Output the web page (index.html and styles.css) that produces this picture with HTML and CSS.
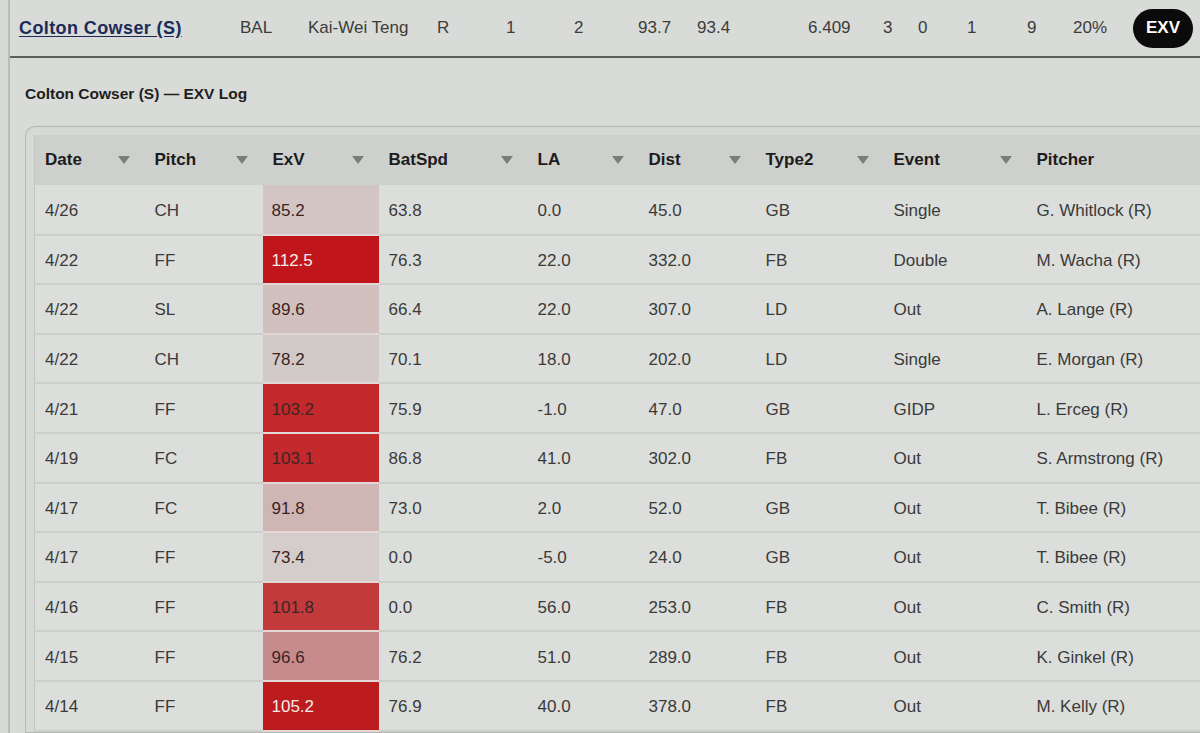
FILE: index.html
```html
<!DOCTYPE html>
<html lang="en">
<head>
<meta charset="utf-8">
<title>Colton Cowser (S) — EXV Log</title>
<link rel="stylesheet" href="styles.css">
</head>
<body>
<div class="page">
  <div class="topbar">
    <a class="player-link" href="#">Colton Cowser (S)</a>
    <span>BAL</span>
    <span>Kai-Wei Teng</span>
    <span>R</span>
    <span>1</span>
    <span>2</span>
    <span>93.7</span>
    <span>93.4</span>
    <span>6.409</span>
    <span>3</span>
    <span>0</span>
    <span>1</span>
    <span>9</span>
    <span>20%</span>
    <span class="pill">EXV</span>
  </div>

  <section class="log">
    <h2 class="log-title">Colton Cowser (S) — EXV Log</h2>
    <div class="card">
      <table class="grid">
        <colgroup>
          <col class="c-date"><col class="c-pitch"><col class="c-exv"><col class="c-bat"><col class="c-la"><col class="c-dist"><col class="c-type"><col class="c-event"><col class="c-pitcher">
        </colgroup>
        <thead>
          <tr>
            <th><div class="th"><span>Date</span><i class="sort"></i></div></th>
            <th><div class="th"><span>Pitch</span><i class="sort"></i></div></th>
            <th><div class="th"><span>ExV</span><i class="sort"></i></div></th>
            <th><div class="th"><span>BatSpd</span><i class="sort"></i></div></th>
            <th><div class="th"><span>LA</span><i class="sort"></i></div></th>
            <th><div class="th"><span>Dist</span><i class="sort"></i></div></th>
            <th><div class="th"><span>Type2</span><i class="sort"></i></div></th>
            <th><div class="th"><span>Event</span><i class="sort"></i></div></th>
            <th><div class="th"><span>Pitcher</span></div></th>
          </tr>
        </thead>
        <tbody>
          <tr><td>4/26</td><td>CH</td><td class="exv" style="background:#d3c5c3">85.2</td><td>63.8</td><td>0.0</td><td>45.0</td><td>GB</td><td>Single</td><td>G. Whitlock (R)</td></tr>
          <tr><td>4/22</td><td>FF</td><td class="exv hot" style="background:#c0161b">112.5</td><td>76.3</td><td>22.0</td><td>332.0</td><td>FB</td><td>Double</td><td>M. Wacha (R)</td></tr>
          <tr><td>4/22</td><td>SL</td><td class="exv" style="background:#d2c0be">89.6</td><td>66.4</td><td>22.0</td><td>307.0</td><td>LD</td><td>Out</td><td>A. Lange (R)</td></tr>
          <tr><td>4/22</td><td>CH</td><td class="exv" style="background:#d2cac8">78.2</td><td>70.1</td><td>18.0</td><td>202.0</td><td>LD</td><td>Single</td><td>E. Morgan (R)</td></tr>
          <tr><td>4/21</td><td>FF</td><td class="exv" style="background:#c3282b">103.2</td><td>75.9</td><td>-1.0</td><td>47.0</td><td>GB</td><td>GIDP</td><td>L. Erceg (R)</td></tr>
          <tr><td>4/19</td><td>FC</td><td class="exv" style="background:#c4292c">103.1</td><td>86.8</td><td>41.0</td><td>302.0</td><td>FB</td><td>Out</td><td>S. Armstrong (R)</td></tr>
          <tr><td>4/17</td><td>FC</td><td class="exv" style="background:#cfb5b4">91.8</td><td>73.0</td><td>2.0</td><td>52.0</td><td>GB</td><td>Out</td><td>T. Bibee (R)</td></tr>
          <tr><td>4/17</td><td>FF</td><td class="exv" style="background:#d4cdcc">73.4</td><td>0.0</td><td>-5.0</td><td>24.0</td><td>GB</td><td>Out</td><td>T. Bibee (R)</td></tr>
          <tr><td>4/16</td><td>FF</td><td class="exv" style="background:#c23a3c">101.8</td><td>0.0</td><td>56.0</td><td>253.0</td><td>FB</td><td>Out</td><td>C. Smith (R)</td></tr>
          <tr><td>4/15</td><td>FF</td><td class="exv" style="background:#c88b8c">96.6</td><td>76.2</td><td>51.0</td><td>289.0</td><td>FB</td><td>Out</td><td>K. Ginkel (R)</td></tr>
          <tr><td>4/14</td><td>FF</td><td class="exv hot" style="background:#bd1c1f">105.2</td><td>76.9</td><td>40.0</td><td>378.0</td><td>FB</td><td>Out</td><td>M. Kelly (R)</td></tr>
        </tbody>
      </table>
    </div>
  </section>
</div>
</body>
</html>
```

FILE: styles.css
```css
html, body {
  margin: 0;
  padding: 0;
  overflow: hidden;
  background: #d6d9d5;
}

body {
  font-family: "Liberation Sans", Arial, sans-serif;
  color: #3a3a3a;
}

.page {
  margin-left: 8px;
  border-left: 2px solid #b9bcb8;
  min-height: 733px;
  background: #d8dbd7;
}

.topbar {
  height: 56px;
  border-bottom: 2px solid #5d605d;
  display: grid;
  grid-template-columns: 221px 68px 129px 69px 68px 64px 59px 111px 75px 35px 49px 60px 46px 60px 60px;
  align-items: center;
  padding-left: 9px;
  font-size: 17px;
  color: #3c3c3c;
  white-space: nowrap;
}

.player-link {
  color: #1c2b57;
  font-weight: bold;
  font-size: 18px;
  letter-spacing: 0.4px;
  text-decoration: underline;
  text-underline-offset: 2px;
}

.pill {
  background: #0b0b0b;
  color: #ffffff;
  font-weight: bold;
  height: 39px;
  width: 60px;
  border-radius: 20px;
  display: flex;
  align-items: center;
  justify-content: center;
  font-size: 17px;
}

.log {
  padding: 26px 0 0 15px;
}

.log-title {
  margin: 0;
  font-size: 15.5px;
  line-height: 20px;
  font-weight: bold;
  color: #1e1e1e;
}

.card {
  margin-top: 22px;
  border: 1px solid #b3b6b2;
  border-right: none;
  border-radius: 10px 0 0 0;
  padding: 8px 0 0 8px;
  width: 1240px;
  background: #d6d9d5;
}

.grid {
  border-collapse: collapse;
  table-layout: fixed;
  width: 1212px;
  font-size: 17px;
  border-left: 1px solid #c2c5c1;
}

.c-date { width: 110px; }
.c-pitch { width: 118px; }
.c-exv { width: 116px; }
.c-bat { width: 149px; }
.c-la { width: 111px; }
.c-dist { width: 117px; }
.c-type { width: 128px; }
.c-event { width: 143px; }
.c-pitcher { width: 220px; }

.grid thead th {
  background: #cdd0cc;
  height: 50px;
  padding: 0 0 0 10px;
  text-align: left;
  font-weight: bold;
  color: #1c1c1c;
}

.th {
  display: flex;
  align-items: center;
  justify-content: space-between;
  padding-right: 15px;
}

.sort {
  width: 0;
  height: 0;
  border-left: 6px solid transparent;
  border-right: 6px solid transparent;
  border-top: 8px solid #7b7d7b;
}

.grid tbody tr {
  height: 49.6px;
}

.grid tbody td {
  padding: 3px 0 0 10px;
  background: #dcdedb;
  border-bottom: 2px solid #cbcec9;
  color: #3a3a3a;
  white-space: nowrap;
}

.grid tbody td.exv {
  padding-left: 9px;
  color: #3b2424;
  border-bottom: 2px solid #e3d8d6;
}

.grid tbody td.exv.hot {
  color: #f4eaea;
}
```
